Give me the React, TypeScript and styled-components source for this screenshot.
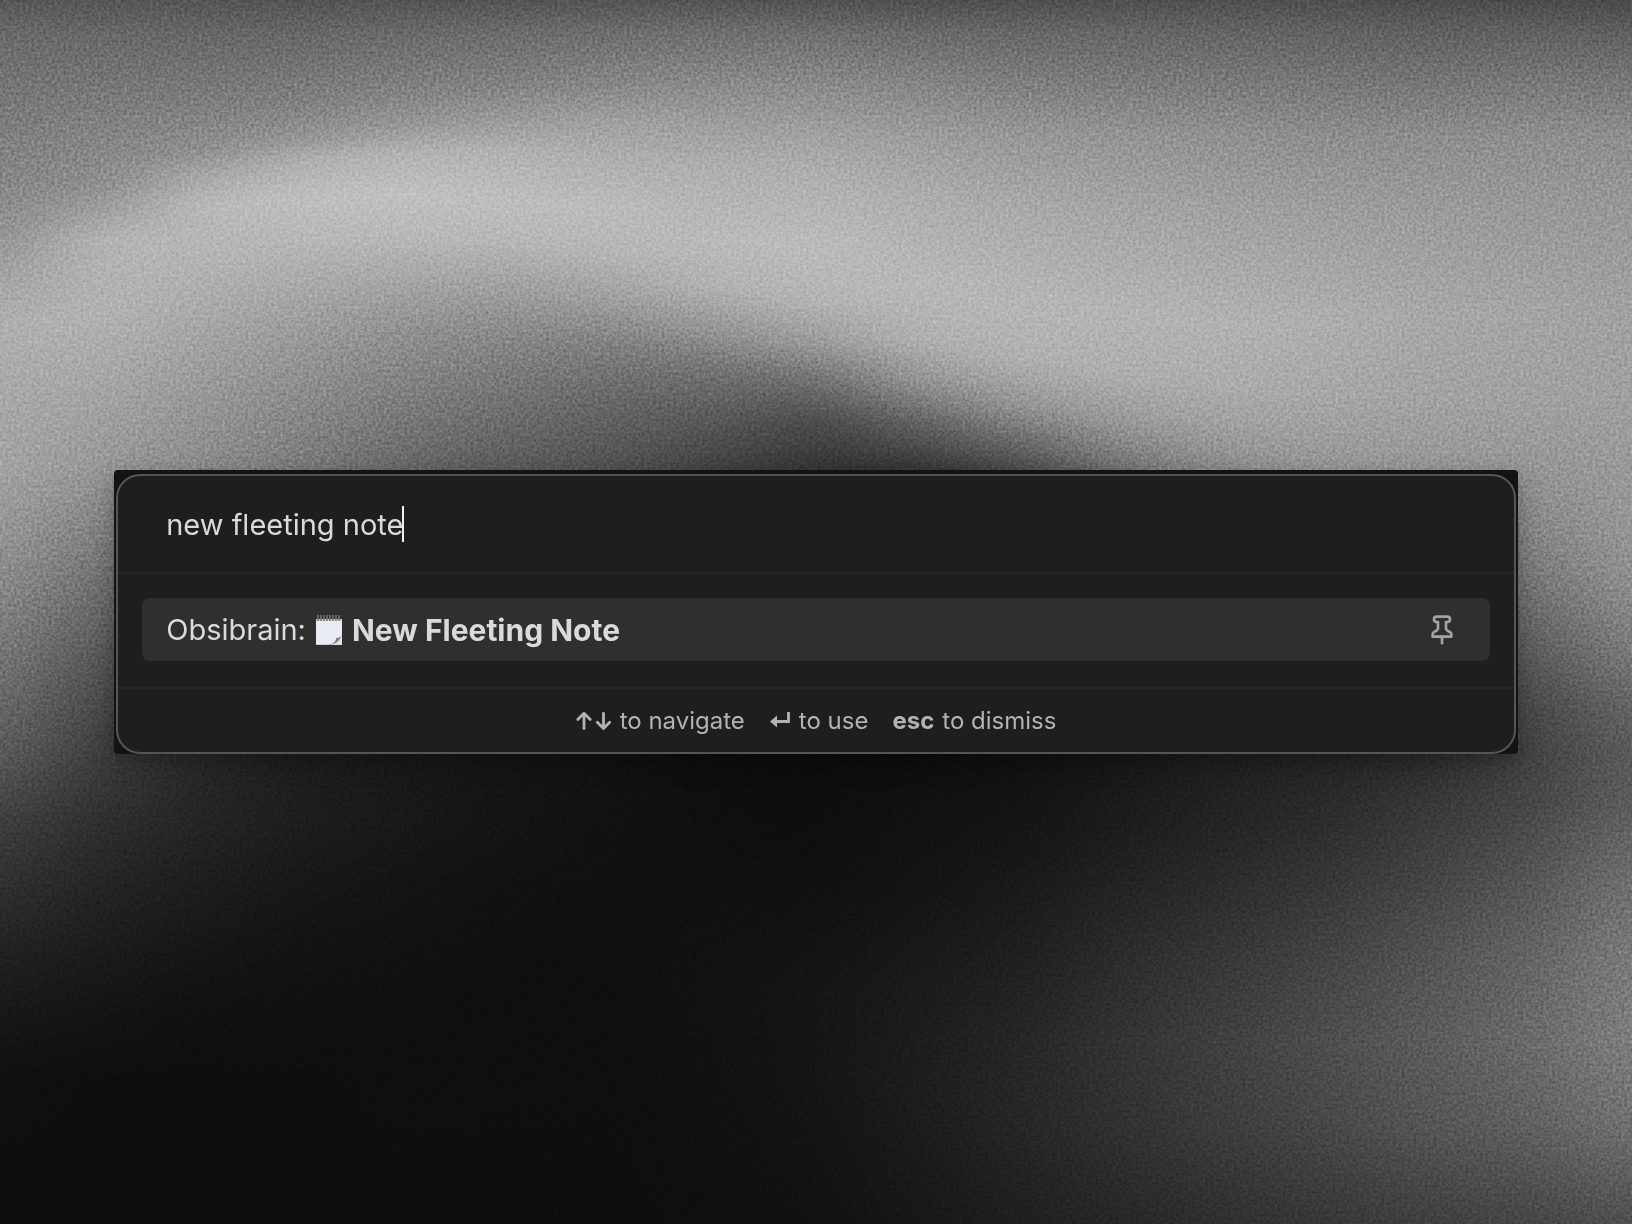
import React, { useState } from "react";
import styled, { createGlobalStyle } from "styled-components";

const GlobalStyle = createGlobalStyle`
  *, *::before, *::after { box-sizing: border-box; }
  body {
    margin: 0;
    background: #0d0d0d;
    font-family: Inter, "Liberation Sans", sans-serif;
  }
`;

/* Each column of the wallpaper: [height in 0..1176, grey level] */
const columns: [number, number][][] = [
  [[0, 86], [32, 104], [128, 124], [224, 142], [260, 158], [310, 174], [384, 167], [448, 162], [500, 152], [550, 140], [650, 112], [724, 90], [790, 62], [850, 48], [920, 32], [980, 22], [1040, 15], [1176, 12]],
  [[0, 84], [32, 102], [128, 130], [175, 138], [200, 155], [230, 180], [300, 178], [384, 162], [448, 150], [500, 130], [550, 112], [650, 78], [724, 60], [790, 45], [850, 35], [920, 25], [980, 18], [1040, 13], [1176, 13]],
  [[0, 84], [32, 101], [100, 124], [146, 142], [168, 167], [196, 185], [256, 178], [320, 163], [384, 149], [448, 138], [724, 38], [790, 35], [850, 28], [920, 20], [980, 15], [1040, 13], [1176, 13]],
  [[0, 82], [32, 101], [100, 127], [133, 148], [152, 174], [190, 190], [232, 182], [284, 164], [334, 149], [384, 136], [448, 120], [724, 28], [790, 28], [850, 22], [920, 17], [1040, 13], [1176, 13]],
  [[0, 82], [32, 104], [90, 130], [120, 150], [145, 177], [184, 192], [224, 184], [266, 166], [316, 143], [366, 128], [448, 102], [724, 24], [790, 23], [850, 19], [950, 15], [1176, 13]],
  [[0, 82], [32, 106], [80, 127], [115, 152], [145, 176], [192, 189], [230, 182], [276, 158], [326, 132], [376, 115], [448, 90], [724, 20], [790, 19], [850, 16], [950, 14], [1176, 13]],
  [[0, 82], [32, 108], [80, 132], [115, 158], [150, 172], [200, 187], [245, 180], [286, 158], [336, 122], [384, 101], [448, 80], [724, 17], [790, 16], [950, 14], [1176, 13]],
  [[0, 82], [32, 109], [80, 136], [120, 156], [160, 173], [230, 185], [275, 177], [316, 148], [356, 112], [405, 86], [448, 66], [724, 13], [790, 14], [950, 17], [1176, 14]],
  [[0, 80], [32, 109], [80, 136], [130, 160], [170, 175], [235, 187], [290, 179], [330, 152], [366, 108], [406, 71], [448, 52], [724, 12], [790, 13], [850, 15], [950, 20], [1030, 20], [1176, 16]],
  [[0, 77], [32, 104], [80, 131], [130, 155], [190, 172], [270, 183], [325, 176], [366, 147], [406, 96], [448, 54], [724, 13], [790, 17], [850, 19], [950, 26], [1050, 28], [1176, 22]],
  [[0, 77], [32, 102], [80, 124], [130, 149], [200, 168], [290, 181], [345, 176], [390, 147], [424, 104], [448, 76], [724, 16], [790, 19], [850, 24], [920, 30], [1000, 37], [1080, 37], [1176, 30]],
  [[0, 78], [32, 101], [80, 122], [130, 146], [200, 163], [300, 179], [362, 173], [404, 152], [448, 116], [724, 22], [790, 27], [850, 34], [920, 43], [1000, 50], [1080, 48], [1176, 38]],
  [[0, 78], [32, 99], [80, 120], [130, 143], [200, 159], [310, 177], [370, 171], [410, 159], [448, 140], [724, 30], [790, 35], [850, 43], [920, 54], [1000, 63], [1080, 60], [1176, 46]],
  [[0, 77], [32, 97], [80, 118], [130, 139], [200, 156], [310, 173], [380, 166], [448, 149], [724, 35], [790, 43], [850, 54], [920, 66], [1000, 76], [1080, 70], [1176, 54]],
  [[0, 75], [32, 95], [80, 116], [130, 139], [200, 153], [300, 166], [380, 161], [448, 150], [724, 42], [770, 54], [850, 68], [920, 82], [1000, 90], [1080, 84], [1176, 62]],
  [[0, 74], [32, 96], [80, 119], [130, 140], [200, 151], [300, 163], [380, 160], [448, 148], [500, 134], [550, 118], [620, 90], [680, 70], [724, 65], [770, 68], [850, 84], [920, 98], [1000, 104], [1080, 94], [1176, 68]],
  [[0, 72], [32, 94], [80, 118], [130, 140], [200, 150], [300, 159], [380, 158], [448, 152], [500, 150], [550, 145], [620, 125], [680, 100], [724, 90], [770, 92], [850, 112], [920, 122], [1000, 125], [1080, 112], [1176, 78]],
];
const COLUMN = 98;

const Page = styled.main`
  position: relative;
  display: flex;
  align-items: center;
  justify-content: center;
  min-height: 100vh;
  padding: 48px 7%;
  overflow: hidden;
`;

const Backdrop = styled.svg`
  position: absolute;
  inset: 0;
  width: 100%;
  height: 100%;
`;

const Grain = styled.rect`
  mix-blend-mode: overlay;
`;

const WindowFrame = styled.div`
  position: relative;
  width: 100%;
  padding: 4px 2px 0;
  border-radius: 4px;
  background: #131313;
  box-shadow: 0 8px 24px rgba(0, 0, 0, 0.3);
`;

const Palette = styled.section`
  border: 2px solid #555;
  border-radius: 24px;
  background: #1e1e1e;
  color: #dadada;
`;

const Prompt = styled.label`
  display: flex;
  align-items: center;
  height: 98px;
  padding: 0 48px;
  border-bottom: 2px solid #262626;
`;

const PromptInput = styled.input`
  field-sizing: content;
  min-width: 2px;
  height: 36px;
  padding: 0;
  border: 0;
  outline: 0;
  background: transparent;
  color: inherit;
  caret-color: transparent;
  font: inherit;
  font-size: 29px;
`;

const Caret = styled.span`
  width: 2px;
  height: 36px;
  margin-left: -1px;
  background: #f0f0f0;
`;

const Results = styled.ul`
  margin: 0;
  padding: 24px 24px 26px;
  list-style: none;
`;

const Result = styled.li`
  display: flex;
  align-items: center;
  justify-content: space-between;
  height: 63px;
  padding: 0 32px 0 24px;
  border-radius: 8px;
  background: #2f2f2f;
`;

const CommandButton = styled.button`
  display: flex;
  flex: 1;
  align-items: center;
  gap: 8px;
  height: 100%;
  padding: 0;
  border: 0;
  background: transparent;
  color: inherit;
  font: inherit;
  font-size: 29px;
  text-align: left;
`;

const Match = styled.strong`
  font-size: 30px;
  font-weight: 700;
`;

const PinButton = styled.button`
  display: flex;
  padding: 0;
  border: 0;
  background: transparent;
  color: #a4a4a4;
`;

const Instructions = styled.footer`
  display: flex;
  align-items: center;
  justify-content: center;
  gap: 24px;
  height: 65px;
  border-top: 2px solid #262626;
  color: #b3b3b3;
  font-size: 24px;
`;

const Instruction = styled.span`
  display: flex;
  align-items: center;
  gap: 8px;
`;

const Key = styled.kbd`
  display: flex;
  font: inherit;
  font-weight: 700;
`;

function Wallpaper() {
  return (
    <Backdrop viewBox="0 0 1568 1176" preserveAspectRatio="none" aria-hidden="true">
      <defs>
        {columns.map((stops, i) => (
          <linearGradient key={i} id={`tone-${i}`} x1="0" y1="0" x2="0" y2="1176" gradientUnits="userSpaceOnUse">
            {stops.map(([y, v]) => (
              <stop key={y} offset={y / 1176} stopColor={`rgb(${v},${v},${v})`} />
            ))}
          </linearGradient>
        ))}
        <filter id="soften" x="-300" y="0" width="2168" height="1176" filterUnits="userSpaceOnUse" colorInterpolationFilters="sRGB">
          <feGaussianBlur stdDeviation="42 0" />
        </filter>
        <filter id="grain" x="0" y="0" width="100%" height="100%" colorInterpolationFilters="sRGB">
          <feTurbulence type="fractalNoise" baseFrequency="0.36" numOctaves="2" seed="4" />
          <feColorMatrix values="0 0 0 1 0.02  0 0 0 1 0.02  0 0 0 1 0.02  0 0 0 0 1" />
        </filter>
      </defs>
      <g filter="url(#soften)">
        {columns.map((_, i) => {
          const first = i === 0;
          const last = i === columns.length - 1;
          const left = first ? -300 : (i - 0.5) * COLUMN;
          const right = last ? 1868 : (i + 0.5) * COLUMN;
          return <rect key={i} x={left} y="0" width={right - left + 1} height="1176" fill={`url(#tone-${i})`} />;
        })}
      </g>
      <Grain width="1568" height="1176" filter="url(#grain)" opacity="0.3" />
    </Backdrop>
  );
}

function Notepad() {
  return (
    <svg width="30" height="32" viewBox="-1 0 30 32" role="img" aria-label="Notepad">
      <path d="M1 5h26v16l-9 10H1z" fill="#e9edf3" />
      <path d="M1 30h17l-1 1H1z" fill="#c9cdd3" />
      <path d="M27 20v11H13c5-1 8-3 8-7 3 0 5-2 6-4z" fill="#dfe3e8" />
      <path d="M27 20c-1 3-3 4-6 4 0 4-3 6-8 7 7 0 12-4 14-11z" fill="#7d8288" />
      <path d="M1 5h26v2H1z" fill="#c4c8cd" />
      <path d="M3 1v6M6 1v6M9 1v6M12 1v6M15 1v6M18 1v6M21 1v6M24 1v6" stroke="#77797c" strokeWidth="1.5" />
    </svg>
  );
}

function Pin() {
  return (
    <svg width="32" height="32" viewBox="0 0 24 24" fill="none" stroke="currentColor" strokeWidth="2" strokeLinecap="round" strokeLinejoin="round" aria-hidden="true">
      <path d="M12 17v5" />
      <path d="M5 17h14v-1.76a2 2 0 0 0-1.11-1.79l-1.78-.9A2 2 0 0 1 15 10.76V6h1a2 2 0 0 0 0-4H8a2 2 0 0 0 0 4h1v4.76a2 2 0 0 1-1.11 1.79l-1.78.9A2 2 0 0 0 5 15.24Z" />
    </svg>
  );
}

function UpDownArrows() {
  return (
    <svg width="36" height="20" viewBox="0 0 36 20" fill="none" stroke="currentColor" strokeWidth="2.8" strokeLinecap="round" strokeLinejoin="round" role="img" aria-label="up and down">
      <path d="M8 17.5V2.5M1.8 8.5L8 2.3l6.2 6.2" />
      <path d="M27.500 2.300v15M21.300 11.300l6.200 6.200 6.200-6.200" />
    </svg>
  );
}

function ReturnArrow() {
  return (
    <svg width="22" height="20" viewBox="0 0 22 20" role="img" aria-label="enter">
      <path d="M19.500 1v9.500H7" fill="none" stroke="currentColor" strokeWidth="2.8" />
      <path d="M1 10.500l7-6v12z" fill="currentColor" />
    </svg>
  );
}

export default function App() {
  const [query, setQuery] = useState("new fleeting note");
  return (
    <Page>
      <GlobalStyle />
      <Wallpaper />
      <WindowFrame>
        <Palette aria-label="Command palette">
          <Prompt>
            <PromptInput
              type="text"
              aria-label="Command"
              value={query}
              onChange={(event) => setQuery(event.target.value)}
            />
            <Caret />
          </Prompt>
          <Results>
            <Result>
              <CommandButton type="button">
                <span>Obsibrain:</span>
                <Notepad />
                <Match>New Fleeting Note</Match>
              </CommandButton>
              <PinButton type="button" aria-label="Pin command">
                <Pin />
              </PinButton>
            </Result>
          </Results>
          <Instructions>
            <Instruction><Key><UpDownArrows /></Key>to navigate</Instruction>
            <Instruction><Key><ReturnArrow /></Key>to use</Instruction>
            <Instruction><Key>esc</Key>to dismiss</Instruction>
          </Instructions>
        </Palette>
      </WindowFrame>
    </Page>
  );
}
